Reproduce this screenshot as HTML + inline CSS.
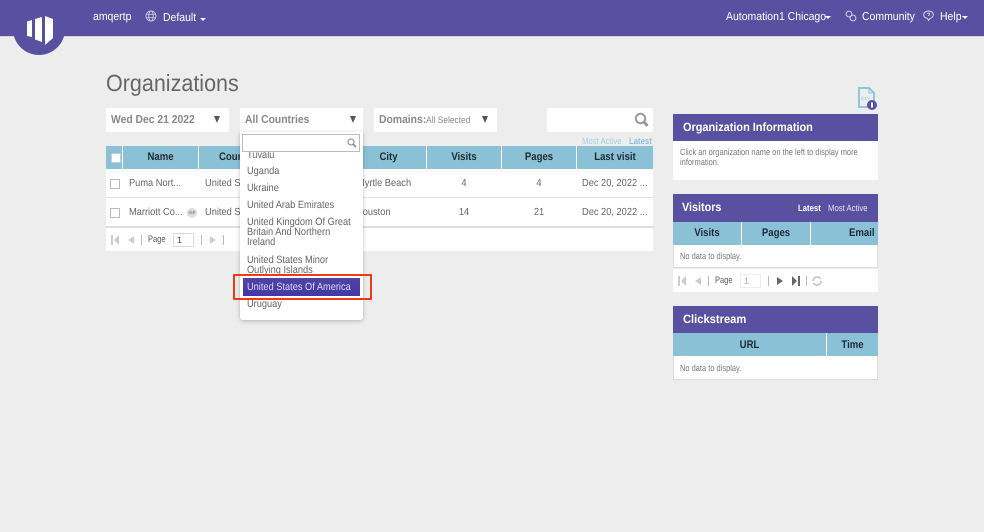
<!DOCTYPE html>
<html><head><meta charset="utf-8"><style>
html,body{margin:0;padding:0;width:984px;height:532px;overflow:hidden;background:#ededed}
body{position:relative;font-family:"Liberation Sans",sans-serif;color:#666;text-rendering:geometricPrecision}
.a,.t{position:absolute}
.t{white-space:nowrap;line-height:14px;transform-origin:0 50%}
.w{background:#fff}
.p{background:#5a50a1}
.b{background:#8bc1d7}
.h{font-weight:bold;color:#1c2a33;font-size:11px;text-align:center;transform:scaleX(.87);transform-origin:50% 50%}
.hl{transform-origin:0 50%}
.n{color:#fff;font-size:11.5px;transform:scaleX(.91)}
.c{font-size:10.2px;color:#666;transform:scaleX(.91)}
.cc{transform-origin:50% 50%;text-align:center}
.o{font-size:10.5px;color:#666;transform:scaleX(.88)}
.sel{font-size:11.5px;font-weight:bold;color:#888;transform:scaleX(.9)}
.ph{color:#fff;font-size:12px;font-weight:bold}
.sm{font-size:9px;transform:scaleX(.86);color:#777}
.pg{font-size:9.5px;color:#555;transform:scaleX(.79)}
.tri{position:absolute;width:0;height:0;border-left:3.5px solid transparent;border-right:3.5px solid transparent;border-top:7px solid #555}
.car{position:absolute;width:0;height:0;border-left:3px solid transparent;border-right:3px solid transparent;border-top:3px solid #fff}
.cb{position:absolute;width:8px;height:8px;background:#fff;border:1px solid #bbb}
.sep{position:absolute;width:1px;height:10px;background:#bbb}
</style></head><body>
<div class="a p" style="left:0;top:0;width:984px;height:36px;border-bottom:1px solid #d4d2e4;box-sizing:content-box"></div>
<div class="a p" style="left:13px;top:3px;width:52px;height:52px;border-radius:50%"></div>
<svg class="a" style="left:0;top:0" width="70" height="56" viewBox="0 0 70 56"><path fill="#fff" d="M27 21.500 32 20V37L27 36ZM35 19 42 17V42L35 39.500ZM45 16 53 19V38L45 45Z"/></svg>
<div class="t n" style="left:93px;top:10px">amqertp</div>
<svg class="a" style="left:145px;top:10px" width="12" height="12" viewBox="0 0 12 12" fill="none" stroke="#c9c6e2" stroke-width=".9"><circle cx="6" cy="6" r="5"/><ellipse cx="6" cy="6" rx="2.200" ry="5"/><path d="M1 4.300H11M1 7.700H11"/></svg>
<div class="t n" style="left:163px;top:11px">Default</div><div class="car" style="left:200px;top:18px"></div>
<div class="t n" style="left:726px;top:10px">Automation1 Chicago</div><div class="car" style="left:825px;top:16px"></div>
<svg class="a" style="left:845px;top:10px" width="12" height="12" viewBox="0 0 12 12" fill="none" stroke="#d5d2ea" stroke-width="1"><circle cx="4" cy="4" r="2.900"/><circle cx="8" cy="8" r="2.900"/></svg>
<div class="t n" style="left:862px;top:10px">Community</div>
<svg class="a" style="left:923px;top:10px" width="11" height="12" viewBox="0 0 11 12" fill="none" stroke="#d5d2ea" stroke-width="1"><path d="M5.500 1C8.300 1 10.300 2.600 10.300 4.700S8.300 8.300 7 8.500L5.500 10.500 4.500 8.400C2.500 8 .7 6.800 .7 4.700S2.700 1 5.500 1Z"/><path d="M4.300 3.800C4.500 2.600 6.800 2.700 6.700 4 6.600 5 5.500 5 5.500 6"/></svg>
<div class="t n" style="left:940px;top:10px">Help</div><div class="car" style="left:962px;top:16px"></div>

<div class="t" style="left:106px;top:69px;font-size:23.400px;line-height:28px;color:#666;transform:scaleX(.92)">Organizations</div>

<div class="a w" style="left:106px;top:108px;width:123px;height:24px"></div>
<div class="t sel" style="left:111px;top:113px">Wed Dec 21 2022</div>
<div class="tri" style="left:214px;top:116px"></div>
<div class="a w" style="left:240px;top:108px;width:123px;height:24px"></div>
<div class="t sel" style="left:245px;top:113px">All Countries</div>
<div class="tri" style="left:350px;top:116px"></div>
<div class="a w" style="left:374px;top:108px;width:123px;height:24px"></div>
<div class="t sel" style="left:379px;top:113px">Domains:<span style="font-weight:normal;font-size:9.300px">All Selected</span></div>
<div class="tri" style="left:482px;top:116px"></div>
<div class="a w" style="left:547px;top:108px;width:106px;height:24px"></div>
<svg class="a" style="left:634px;top:112px" width="15" height="16" viewBox="0 0 15 16" fill="none" stroke="#999" stroke-width="2"><circle cx="6.500" cy="6.500" r="4.700"/><path stroke-width="3" d="M10 10 13.500 14"/></svg>
<div class="t sm" style="left:582px;top:134px;color:#a5cfe1">Most Active</div>
<div class="t sm" style="left:629px;top:134px;font-weight:bold;color:#8bc1d7">Latest</div>

<div class="a b" style="left:106px;top:146px;width:547px;height:23px"></div>
<div class="a w" style="left:122px;top:146px;width:1px;height:23px"></div>
<div class="a w" style="left:198px;top:146px;width:1px;height:23px"></div>
<div class="a w" style="left:426px;top:146px;width:1px;height:23px"></div>
<div class="a w" style="left:501px;top:146px;width:1px;height:23px"></div>
<div class="a w" style="left:576px;top:146px;width:1px;height:23px"></div>
<div class="a" style="left:111px;top:153px;width:8px;height:8px;background:#fff;border:.5px solid #ccc"></div>
<div class="t h" style="left:123px;top:150px;width:75px">Name</div>
<div class="t h hl" style="left:219px;top:150px">Coun</div>
<div class="t h" style="left:351px;top:150px;width:75px">City</div>
<div class="t h" style="left:427px;top:150px;width:74px">Visits</div>
<div class="t h" style="left:502px;top:150px;width:74px">Pages</div>
<div class="t h" style="left:577px;top:150px;width:76px">Last visit</div>

<div class="a w" style="left:106px;top:169px;width:547px;height:28px;border-bottom:1px solid #e2e2e2"></div>
<div class="a w" style="left:106px;top:198px;width:547px;height:28px;border-bottom:2px solid #ddd"></div>
<div class="cb" style="left:110px;top:179px"></div>
<div class="cb" style="left:110px;top:208px"></div>
<div class="t c" style="left:129px;top:177px">Puma Nort...</div>
<div class="t c" style="left:129px;top:206px">Marriott Co...</div>
<div class="a" style="left:187px;top:208px;width:10px;height:10px;border-radius:50%;background:#ddd;color:#666;font-size:4.500px;line-height:10px;text-align:center">ISP</div>
<div class="t c" style="left:205px;top:177px">United S</div>
<div class="t c" style="left:205px;top:206px">United S</div>
<div class="t c" style="left:357px;top:177px">Myrtle Beach</div>
<div class="t c" style="left:356px;top:206px">Houston</div>
<div class="t c cc" style="left:427px;top:177px;width:74px">4</div>
<div class="t c cc" style="left:427px;top:206px;width:74px">14</div>
<div class="t c cc" style="left:502px;top:177px;width:74px">4</div>
<div class="t c cc" style="left:502px;top:206px;width:74px">21</div>
<div class="t c" style="left:582px;top:177px">Dec 20, 2022 ...</div>
<div class="t c" style="left:582px;top:206px">Dec 20, 2022 ...</div>

<div class="a w" style="left:106px;top:228px;width:547px;height:23px"></div>
<svg class="a" style="left:111px;top:235px" width="8" height="10" viewBox="0 0 8 10" fill="#ccc"><path d="M0 0H2V10H0ZM8 0V10L3 5Z"/></svg>
<svg class="a" style="left:128px;top:236px" width="6" height="8" viewBox="0 0 6 8" fill="#ccc"><path d="M6 0V8L0 4Z"/></svg>
<div class="sep" style="left:141px;top:235px"></div>
<div class="t pg" style="left:148px;top:233px">Page</div>
<div class="a" style="left:173px;top:233px;width:19px;height:12px;background:#fff;border:1px solid #d8d8e8;font-size:9px;line-height:12px;color:#444;text-indent:3px">1</div>
<div class="sep" style="left:201px;top:235px"></div>
<svg class="a" style="left:210px;top:236px" width="6" height="8" viewBox="0 0 6 8" fill="#ccc"><path d="M0 0V8L6 4Z"/></svg>
<div class="sep" style="left:223px;top:235px"></div>

<!-- dropdown -->
<div class="a w" style="left:240px;top:132px;width:123px;height:188px;border-radius:0 0 3px 3px;box-shadow:0 1px 4px rgba(0,0,0,.25);overflow:hidden">
<div class="t o" style="left:7px;top:16px">Tuvalu</div>
<div class="a w" style="left:0;top:0;width:123px;height:20px"></div>
<div class="a" style="left:2px;top:2px;width:116px;height:16px;background:#fff;border:1px solid #bbb"></div>
<svg class="a" style="left:107px;top:6px" width="10" height="10" viewBox="0 0 10 10" fill="none" stroke="#888" stroke-width="1.100"><circle cx="4" cy="4" r="3"/><path stroke-width="1.600" d="M6.300 6.300 9 9"/></svg>
<div class="t o" style="left:7px;top:32px">Uganda</div>
<div class="t o" style="left:7px;top:49px">Ukraine</div>
<div class="t o" style="left:7px;top:66px">United Arab Emirates</div>
<div class="t o" style="left:7px;top:85px;line-height:10px">United Kingdom Of Great<br>Britain And Northern<br>Ireland</div>
<div class="t o" style="left:7px;top:123px;line-height:10px">United States Minor<br>Outlying Islands</div>
<div class="a" style="left:3px;top:146px;width:117px;height:18px;background:linear-gradient(#4f44a3,#4536a8)"></div>
<div class="t o" style="left:7px;top:148px;color:#dcdcf5">United States Of America</div>
<div class="t o" style="left:7px;top:165px">Uruguay</div>
</div>
<div class="a" style="left:233px;top:274px;width:135px;height:22px;border:2px solid #f03a17;border-radius:1px"></div>

<!-- CSV -->
<svg class="a" style="left:857px;top:86px" width="22" height="26" viewBox="0 0 22 26"><path fill="none" stroke="#8bc8de" stroke-width="2" d="M2 2H12L17 7V21H2Z"/><path fill="none" stroke="#8bc8de" d="M12 2V7H17"/><text x="4" y="14" font-size="4.500" font-weight="bold" fill="#a8d4e5" font-family="Liberation Sans">CSV</text><circle cx="15" cy="19" r="5" fill="#5a50a1"/><rect x="14" y="16.500" width="2" height="5" fill="#fff"/></svg>

<!-- Org info -->
<div class="a p" style="left:673px;top:114px;width:205px;height:27px"></div>
<div class="t ph" style="left:683px;top:120px;transform:scaleX(.91)">Organization Information</div>
<div class="a w" style="left:673px;top:141px;width:205px;height:39px"></div>
<div class="t sm" style="left:680px;top:148px;line-height:9.500px;transform:scaleX(.83)">Click an organization name on the left to display more<br>information.</div>

<!-- Visitors -->
<div class="a p" style="left:673px;top:194px;width:205px;height:28px"></div>
<div class="t ph" style="left:682px;top:200px;transform:scaleX(.9)">Visitors</div>
<div class="t sm" style="left:798px;top:201px;color:#fff;font-weight:bold">Latest</div>
<div class="t sm" style="left:828px;top:201px;color:#e4e2f2">Most Active</div>
<div class="a b" style="left:673px;top:222px;width:205px;height:23px"></div>
<div class="a w" style="left:741px;top:222px;width:1px;height:23px"></div>
<div class="a w" style="left:810px;top:222px;width:1px;height:23px"></div>
<div class="t h" style="left:673px;top:226px;width:68px">Visits</div>
<div class="t h" style="left:742px;top:226px;width:68px">Pages</div>
<div class="t h hl" style="left:849px;top:226px">Email</div>
<div class="a w" style="left:673px;top:245px;width:203px;height:22px;border:1px solid #ddd;border-top:0"></div>
<div class="t sm" style="left:680px;top:249px;transform:scaleX(.83)">No data to display.</div>
<div class="a w" style="left:673px;top:269px;width:205px;height:23px"></div>
<svg class="a" style="left:678px;top:276px" width="8" height="10" viewBox="0 0 8 10" fill="#ccc"><path d="M0 0H2V10H0ZM8 0V10L3 5Z"/></svg>
<svg class="a" style="left:695px;top:277px" width="6" height="8" viewBox="0 0 6 8" fill="#ccc"><path d="M6 0V8L0 4Z"/></svg>
<div class="sep" style="left:708px;top:276px"></div>
<div class="t pg" style="left:715px;top:274px">Page</div>
<div class="a" style="left:740px;top:274px;width:19px;height:12px;background:#fff;border:1px solid #eee;font-size:9px;line-height:12px;color:#aaa;text-indent:3px">1</div>
<div class="sep" style="left:768px;top:276px"></div>
<svg class="a" style="left:777px;top:277px" width="6" height="8" viewBox="0 0 6 8" fill="#666"><path d="M0 0V8L6 4Z"/></svg>
<svg class="a" style="left:792px;top:276px" width="8" height="10" viewBox="0 0 8 10" fill="#666"><path d="M0 0 5 5 0 10ZM6 0H8V10H6Z"/></svg>
<div class="sep" style="left:806px;top:276px"></div>
<svg class="a" style="left:812px;top:276px" width="10" height="10" viewBox="0 0 10 10" fill="none" stroke="#bbb" stroke-width="1.400"><path d="M1 5A4 4 0 0 1 8.500 3M9 5A4 4 0 0 1 1.500 7"/></svg>

<!-- Clickstream -->
<div class="a p" style="left:673px;top:306px;width:205px;height:27px"></div>
<div class="t ph" style="left:683px;top:312px;transform:scaleX(.93)">Clickstream</div>
<div class="a b" style="left:673px;top:333px;width:205px;height:23px"></div>
<div class="a w" style="left:826px;top:333px;width:1px;height:23px"></div>
<div class="t h" style="left:673px;top:338px;width:153px">URL</div>
<div class="t h" style="left:827px;top:338px;width:51px">Time</div>
<div class="a w" style="left:673px;top:356px;width:203px;height:23px;border:1px solid #ddd;border-top:0"></div>
<div class="t sm" style="left:680px;top:361px;transform:scaleX(.83)">No data to display.</div>
</body></html>
